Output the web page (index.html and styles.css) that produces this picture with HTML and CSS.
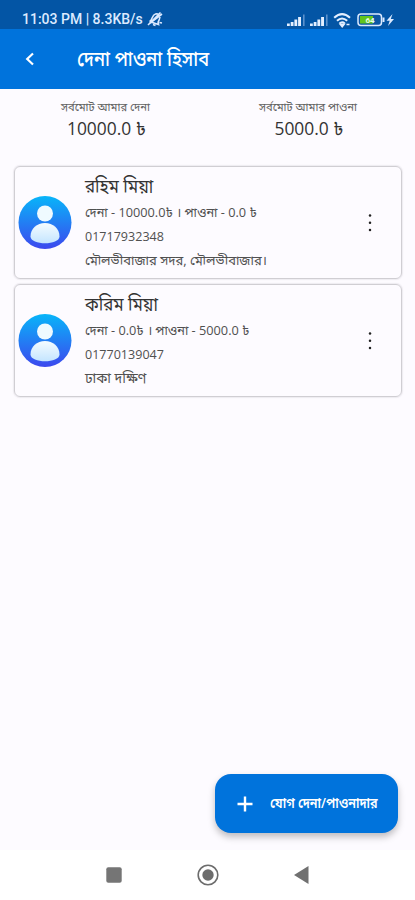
FILE: index.html
```html
<!DOCTYPE html>
<html lang="bn">
<head>
<meta charset="utf-8">
<meta name="viewport" content="width=device-width, initial-scale=1">
<title>দেনা পাওনা হিসাব</title>
<link rel="stylesheet" href="styles.css">
</head>
<body>
<div class="screen">
  <div class="status">
    <span class="clock">11:03 PM | 8.3KB/s</span>
    <svg class="mute" width="18" height="18" viewBox="0 0 18 18" fill="none" stroke="#dceaff" stroke-width="1.600"><path d="M3.500 11.500C7 10 5.500 5 9.500 4S15 7 13.300 9.500 12 12.500 12.500 14.500L3.500 11.500M7 14.500l2.500 1M2 15 14.500 2.500M3.500 13.500 16 4M13.500 12.500l2.500 .5"/></svg>
    <span class="grow"></span>
    <svg class="signal" width="19" height="14" viewBox="0 0 19 14"><path fill="#e4efff" d="M0 10.500h2.800V13H0zM3.700 9h2.800v4H3.700zM7.400 6.500h2.800V13H7.400zM11.100 4h2.900v9h-2.900z"/><path fill="#5c91cc" d="M16 1.500h1.600V13H16z"/></svg>
    <svg class="signal second" width="19" height="14" viewBox="0 0 19 14"><path fill="#e4efff" d="M0 10.500h2.800V13H0zM3.700 9h2.800v4H3.700zM7.400 6.500h2.800V13H7.400zM11.100 4h2.900v9h-2.900z"/><path fill="#5c91cc" d="M16 1.500h1.600V13H16z"/></svg>
    <svg class="wifi" width="19" height="16" viewBox="0 0 19 16" fill="none" stroke="#e4efff" stroke-width="2"><path d="M1.200 5.800Q9 -1.600 17 5.800M4 8.800q5-4.600 10.200 0M6.500 11.500q2.600-2.400 5.300 0"/><path d="m7.200 12.300 2 2.500 2-2.500zM13.500 12.500h3" fill="#e4efff" stroke-width="1.500"/></svg>
    <svg class="battery" width="38" height="14" viewBox="0 0 38 14"><rect x="1" y="1" width="23.500" height="11.500" rx="3" fill="#0b56a4" stroke="#dceaff" stroke-width="1.500"/><path fill="#62c51c" d="M3 3h13v7.500H3z"/><path fill="#dceaff" d="M25.500 4.500h2v4.500h-2zM35.500 1l-6 6.700h3.200L31 13l6-7h-3.200z"/><text x="8.500" y="10.200" class="level">64</text></svg>
  </div>
  <header class="bar">
    <svg class="back" width="10" height="14" viewBox="0 0 10 14" fill="none" stroke="#fff" stroke-width="2.200"><path d="M8 1.500 2.200 7l5.800 5.500"/></svg>
    <h1 class="title">দেনা পাওনা হিসাব</h1>
  </header>
  <section class="totals">
    <div class="total"><div class="label">সর্বমোট আমার দেনা</div><div class="amount">10000.0 ৳</div></div>
    <div class="total"><div class="label receive">সর্বমোট আমার পাওনা</div><div class="amount">5000.0 ৳</div></div>
  </section>
  <main class="list">
    <article class="card">
      <svg class="avatar" width="54" height="54" viewBox="0 0 54 54"><defs><linearGradient id="blue" x1="0" y1="0" x2="0" y2="1"><stop stop-color="#08b5f9"/><stop offset="1" stop-color="#3c48ee"/></linearGradient><linearGradient id="pale" x1="0" y1="0" x2="0" y2="1"><stop stop-color="#f5fcff"/><stop offset="1" stop-color="#c4e5ff"/></linearGradient></defs><circle cx="27" cy="26.500" r="26.500" fill="url(#blue)"/><circle cx="27" cy="17.500" r="8" fill="#effaff"/><path d="M12.500 40.500C12.500 32.500 19 27 27 27S41.500 32.500 41.500 40.500C41.500 49.500 12.500 49.500 12.500 40.500z" fill="url(#pale)"/></svg>
      <div class="info"><div class="name">রহিম মিয়া</div><div class="line balance">দেনা - 10000.0৳ । পাওনা - 0.0 ৳</div><div class="line phone">01717932348</div><div class="line place">মৌলভীবাজার সদর, মৌলভীবাজার।</div></div>
      <svg class="more" width="4" height="20" viewBox="0 0 4 20" fill="#222"><circle cx="2" cy="2.500" r="1.250"/><circle cx="2" cy="9.700" r="1.250"/><circle cx="2" cy="16.900" r="1.250"/></svg>
    </article>
    <article class="card">
      <svg class="avatar" width="54" height="54" viewBox="0 0 54 54"><circle cx="27" cy="26.500" r="26.500" fill="url(#blue)"/><circle cx="27" cy="17.500" r="8" fill="#effaff"/><path d="M12.500 40.500C12.500 32.500 19 27 27 27S41.500 32.500 41.500 40.500C41.500 49.500 12.500 49.500 12.500 40.500z" fill="url(#pale)"/></svg>
      <div class="info"><div class="name">করিম মিয়া</div><div class="line balance">দেনা - 0.0৳ । পাওনা - 5000.0 ৳</div><div class="line phone">01770139047</div><div class="line place area">ঢাকা দক্ষিণ</div></div>
      <svg class="more" width="4" height="20" viewBox="0 0 4 20" fill="#222"><circle cx="2" cy="2.500" r="1.250"/><circle cx="2" cy="9.700" r="1.250"/><circle cx="2" cy="16.900" r="1.250"/></svg>
    </article>
  </main>
  <button class="add">
    <svg width="16" height="16" viewBox="0 0 16 16" stroke="#fff" stroke-width="2.400"><path d="M8 .5v15M.5 8h15"/></svg>
    <span class="add-text">যোগ দেনা/পাওনাদার</span>
  </button>
  <nav class="nav">
    <svg width="16" height="16" viewBox="0 0 16 16"><rect x=".3" y=".3" width="15.400" height="15.400" rx="2" fill="#757575"/></svg>
    <svg width="22" height="22" viewBox="0 0 22 22"><circle cx="11" cy="11" r="9.800" fill="none" stroke="#6c6c6c" stroke-width="1.600"/><circle cx="11" cy="11" r="5.700" fill="#6c6c6c"/></svg>
    <svg width="15" height="18" viewBox="0 0 15 18"><path d="M14.500 0v18L0 9z" fill="#707070"/></svg>
  </nav>
</div>
</body>
</html>
```
FILE: styles.css
```css
* { box-sizing: border-box; }
body { margin: 0; font-family: "Open Sans", "Noto Sans", "Noto Sans Bengali", sans-serif; background: #fdfbff; }
.screen { width: 415px; height: 900px; display: flex; flex-direction: column; overflow: hidden; white-space: nowrap; }
.status { height: 29px; flex: none; display: flex; align-items: center; padding: 10px 20px 0 22px; background: #0355a5; }
.clock { font: 500 14px/19px Roboto, sans-serif; color: #dceaff; width: 122px; }
.mute { margin-left: 2px; margin-top: -2px; }
.grow { flex: 1; }
.signal.second { margin-left: 4px; }
.wifi { margin-left: 4px; }
.battery { margin-left: 5px; }
.level { font: 700 8px Roboto, sans-serif; fill: #e8ffe0; }
.bar { height: 60px; flex: none; display: flex; align-items: center; padding-left: 25px; background: #0073dc; color: #fff; }
.title { margin: 0 0 0 42px; font-size: 20px; line-height: 30px; font-weight: 500; transform: scaleX(.91); transform-origin: left; }
.totals { height: 77px; flex: none; display: grid; grid-template-columns: 211px 194px; padding-top: 9px; text-align: center; }
.total { display: flex; flex-direction: column; align-items: center; }
.label { font-size: 11.2px; line-height: 18px; color: #606060; }
.amount { font-size: 17.4px; line-height: 24px; color: #333; margin-left: 2px; }
.list { flex: 1; display: flex; flex-direction: column; gap: 5px; padding: 0 13px 0 14px; }
.card { height: 113px; display: flex; align-items: center; border: 1px solid #d0ced3; border-radius: 6px; padding: 0 29px 0 3px; box-shadow: 0 0 1px 1px rgba(190,188,195,.25); }
.avatar { flex: none; }
.info { flex: 1; align-self: stretch; margin-left: 13px; padding-top: 5px; }
.name { font-size: 19px; line-height: 28px; color: #333; transform: scaleX(.89); transform-origin: left; }
.line { font-size: 13px; line-height: 24px; color: #505050; transform-origin: left; }
.balance { transform: scaleX(.98); }
.phone { transform: scaleX(.965); }
.area { font-size: 13.8px; }
.more { flex: none; }
.add { align-self: flex-end; flex: none; width: 183px; height: 59px; margin: 0 17px 17px 0; border: 0; border-radius: 16px; background: #0073dc; color: #fff; display: flex; align-items: center; padding: 0 0 0 22px; font-family: inherit; box-shadow: 0 4px 7px rgba(0,0,0,.25); }
.add-text { margin-left: 17px; font-size: 14px; font-weight: 600; transform: scaleX(.9); transform-origin: left; }
.nav { height: 50px; flex: none; background: #fff; display: flex; align-items: center; padding-left: 106px; }
.nav svg:nth-child(2) { margin-left: 75px; }
.nav svg:nth-child(3) { margin-left: 75px; }
```
